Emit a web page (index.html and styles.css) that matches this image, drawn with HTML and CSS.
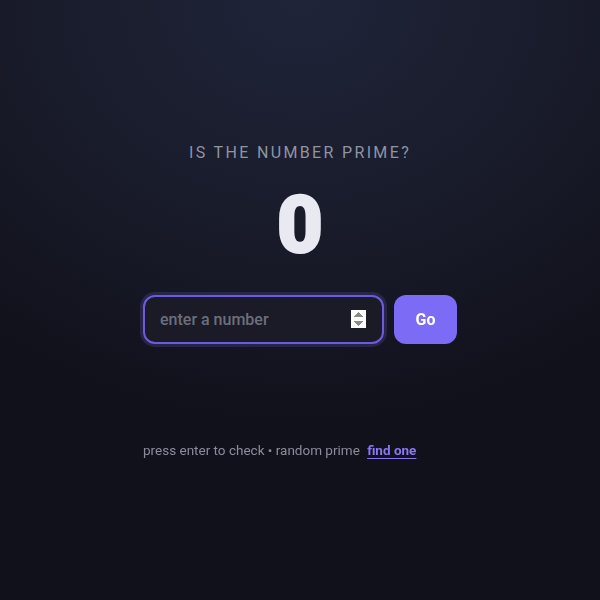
FILE: index.html
```html
<!DOCTYPE html>
<html lang="en">
<head>
<meta charset="utf-8">
<title>Is the number prime?</title>
<link rel="stylesheet" href="styles.css">
</head>
<body>
<main class="app">
  <h1 class="title">IS THE NUMBER PRIME?</h1>
  <div class="result">0</div>
  <div class="stack">
    <form class="row" onsubmit="return false">
      <input class="field" type="number" placeholder="enter a number" autofocus>
      <button class="go" type="submit">Go</button>
    </form>
    <p class="hint">press enter to check • random prime <a class="link" href="#">find one</a></p>
  </div>
</main>
</body>
</html>
```

FILE: styles.css
```css
html, body {
  margin: 0;
  height: 100%;
}
body {
  background: radial-gradient(ellipse 95% 80% at 50% 0%, #1f2439 0%, #191c2b 45%, #11111b 88%);
  background-color: #11111b;
  font-family: Roboto, "Liberation Sans", sans-serif;
  color: #e8e8f0;
}
.app {
  display: flex;
  flex-direction: column;
  align-items: center;
  padding-top: 143px;
}
.title {
  margin: 0;
  font-size: 16px;
  line-height: 20px;
  font-weight: 400;
  letter-spacing: 2.35px;
  color: #8f94a4;
}
.result {
  margin-top: 22px;
  font-size: 80px;
  line-height: 80px;
  font-weight: 900;
  color: #e9e9f1;
  -webkit-text-stroke: 2px #e9e9f1;
}
.stack {
  margin-top: 30px;
  display: flex;
  flex-direction: column;
}
.row {
  display: flex;
  gap: 10px;
  margin: 0;
}
.field {
  box-sizing: border-box;
  width: 241px;
  height: 49px;
  padding: 0 16px 0 15px;
  border: 2px solid #6b5cd9;
  border-radius: 12px;
  background: #1a1b27;
  box-shadow: 0 0 0 3px rgba(108, 92, 224, 0.22);
  color: #e8e8f0;
  font-family: Roboto, "Liberation Sans", sans-serif;
  font-size: 16px;
  font-weight: 500;
  outline: none;
}
.field::placeholder {
  color: #6c6f7b;
}
.go {
  box-sizing: border-box;
  width: 63px;
  height: 49px;
  border: none;
  border-radius: 12px;
  background: #7b6bf5;
  color: #ffffff;
  font-family: Roboto, "Liberation Sans", sans-serif;
  font-size: 16px;
  font-weight: 700;
}
.hint {
  margin: 97px 0 0;
  font-size: 13.5px;
  line-height: 18px;
  color: #8b8d9c;
}
.link {
  margin-left: 4px;
  color: #8877f5;
  font-weight: 700;
  text-decoration: underline;
  text-underline-offset: 3px;
}
```
